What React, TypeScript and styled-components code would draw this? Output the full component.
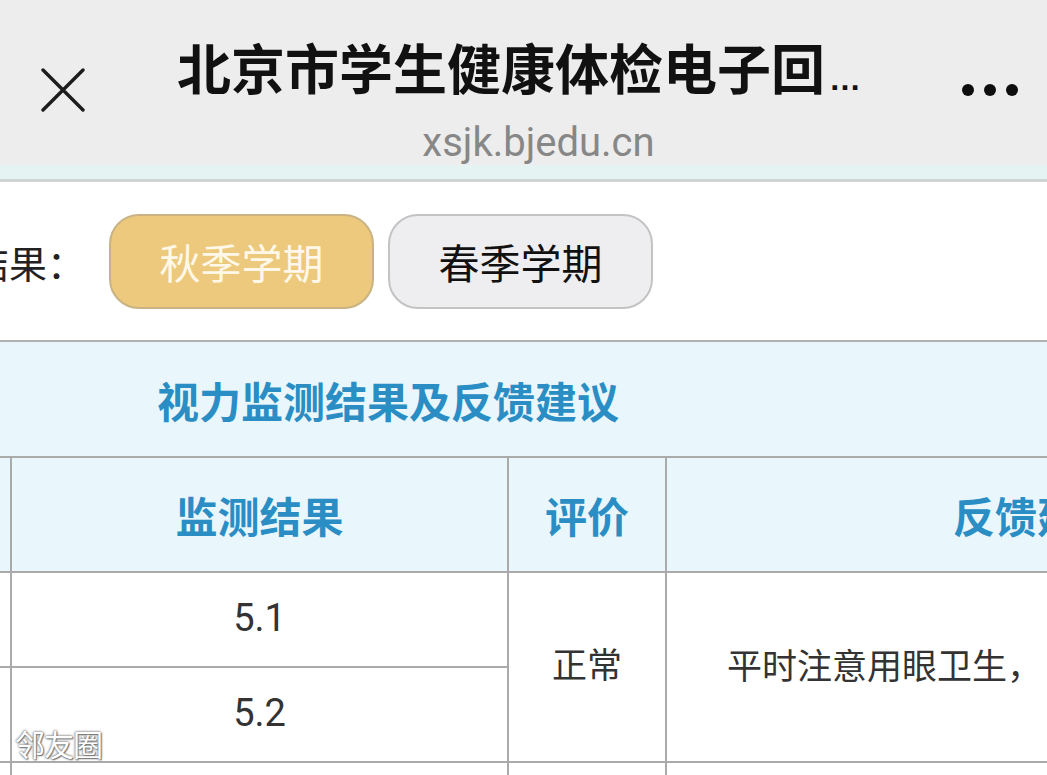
import React from "react";
import styled, { createGlobalStyle } from "styled-components";

const GlobalStyle = createGlobalStyle`
  html, body {
    margin: 0;
    padding: 0;
    background: #ffffff;
    width: 1047px;
    height: 775px;
    overflow: hidden;
  }
  body {
    font-family: "Noto Sans CJK SC", "Noto Sans", sans-serif;
  }
`;

const Page = styled.div`
  position: relative;
  width: 1047px;
  height: 775px;
  overflow: hidden;
  background: #ffffff;
`;

const TopBar = styled.header`
  height: 165px;
  background: #ededed;
  display: grid;
  grid-template-columns: 150px 1fr 150px;
  align-items: start;
`;

const CloseBtn = styled.div`
  padding: 68px 0 0 41px;
  display: flex;
`;

const TitleBox = styled.div`
  padding-top: 38px;
  display: flex;
  flex-direction: column;
  align-items: center;
  gap: 14px;
`;

const Title = styled.div`
  font-family: "Noto Sans CJK SC", sans-serif;
  font-weight: 700;
  font-size: 54px;
  line-height: 58px;
  color: #111111;
  white-space: nowrap;
  margin-right: 10px;
  display: flex;
  align-items: baseline;
`;

const Ellipsis = styled.span`
  font-family: "Liberation Sans", sans-serif;
  font-weight: 700;
  font-size: 32px;
  letter-spacing: -1px;
  margin-left: 4px;
`;

const Url = styled.div`
  font-family: Roboto, "Liberation Sans", sans-serif;
  font-size: 40px;
  line-height: 42px;
  color: #878787;
  margin-left: 30px;
`;

const MoreBtn = styled.div`
  padding: 84px 29px 0 0;
  display: flex;
  justify-content: flex-end;
  gap: 10px;
`;

const Dot = styled.span`
  width: 12px;
  height: 12px;
  border-radius: 50%;
  background: #0e0e0e;
`;

const Strip = styled.div`
  height: 14px;
  background: #e6f3f3;
  border-bottom: 3px solid #d0d4d4;
`;

const TabsRow = styled.div`
  height: 158px;
  display: flex;
  align-items: center;
  gap: 14px;
`;

const TabLabel = styled.div`
  font-size: 38px;
  color: #222222;
  margin-left: -29px;
  margin-right: 10px;
  white-space: nowrap;
`;

const TabButton = styled.div<{ $active?: boolean }>`
  width: 265px;
  height: 95px;
  box-sizing: border-box;
  border-radius: 30px;
  border: 2px solid ${(p) => (p.$active ? "#c9b283" : "#c3c3c3")};
  background: ${(p) => (p.$active ? "#ecc97c" : "#eeedef")};
  color: ${(p) => (p.$active ? "#fff8e8" : "#111111")};
  font-size: 41px;
  display: flex;
  align-items: center;
  justify-content: center;
`;

const Section = styled.section`
  border-top: 2px solid #b1b1b1;
`;

const SectionTitle = styled.div`
  height: 114px;
  background: #e9f6fc;
  display: flex;
  align-items: center;
  padding-left: 157px;
  font-size: 42px;
  font-weight: 700;
  color: #2a8ec4;
  border-bottom: 2px solid #aaaaaa;
`;

const Grid = styled.div`
  display: grid;
  grid-template-columns: 10px 495px 156px 740px;
  grid-template-rows: 113px 93px 93px 40px;
  gap: 2px;
  background: #aaaaaa;
  width: 1409px;
`;

const HeadCell = styled.div`
  background: #e9f6fc;
  display: flex;
  align-items: center;
  justify-content: center;
  font-size: 42px;
  font-weight: 700;
  color: #2a8ec4;
  white-space: nowrap;
`;

const Cell = styled.div<{ $span?: number }>`
  background: #ffffff;
  display: flex;
  align-items: center;
  justify-content: center;
  font-size: 35px;
  color: #333333;
  white-space: nowrap;
  grid-row: ${(p) => (p.$span ? `span ${p.$span}` : "auto")};
`;

const NumCell = styled(Cell)`
  font-family: Roboto, "Liberation Sans", sans-serif;
  font-size: 38px;
  padding-bottom: 4px;
`;

const EvalCell = styled(Cell)`
  padding-bottom: 10px;
`;

const AdviceCell = styled(Cell)`
  justify-content: flex-start;
  padding-left: 60px;
  padding-bottom: 8px;
`;

const Watermark = styled.div`
  position: absolute;
  left: 15px;
  top: 721px;
  font-size: 30px;
  color: #ffffff;
  letter-spacing: -1px;
  text-shadow: 0 0 2px #6f6f6f, 0 0 3px #8a8a8a, 1px 1px 1px #777777;
`;

export default function App() {
  return (
    <Page>
      <GlobalStyle />
      <TopBar>
        <CloseBtn>
          <svg width="44" height="44" viewBox="0 0 44 44" fill="none">
            <path d="M2 2L42 42M42 2L2 42" stroke="#1c1c1c" strokeWidth="3.4" strokeLinecap="round" />
          </svg>
        </CloseBtn>
        <TitleBox>
          <Title>
            北京市学生健康体检电子回<Ellipsis>…</Ellipsis>
          </Title>
          <Url>xsjk.bjedu.cn</Url>
        </TitleBox>
        <MoreBtn>
          <Dot />
          <Dot />
          <Dot />
        </MoreBtn>
      </TopBar>
      <Strip />
      <TabsRow>
        <TabLabel>结果：</TabLabel>
        <TabButton $active>秋季学期</TabButton>
        <TabButton>春季学期</TabButton>
      </TabsRow>
      <Section>
        <SectionTitle>视力监测结果及反馈建议</SectionTitle>
        <Grid>
          <HeadCell />
          <HeadCell>监测结果</HeadCell>
          <HeadCell>评价</HeadCell>
          <HeadCell>反馈建议</HeadCell>
          <Cell />
          <NumCell>5.1</NumCell>
          <EvalCell $span={2}>正常</EvalCell>
          <AdviceCell $span={2}>平时注意用眼卫生，</AdviceCell>
          <Cell />
          <NumCell>5.2</NumCell>
          <Cell />
          <Cell />
          <Cell />
          <Cell />
        </Grid>
      </Section>
      <Watermark>邻友圈</Watermark>
    </Page>
  );
}
